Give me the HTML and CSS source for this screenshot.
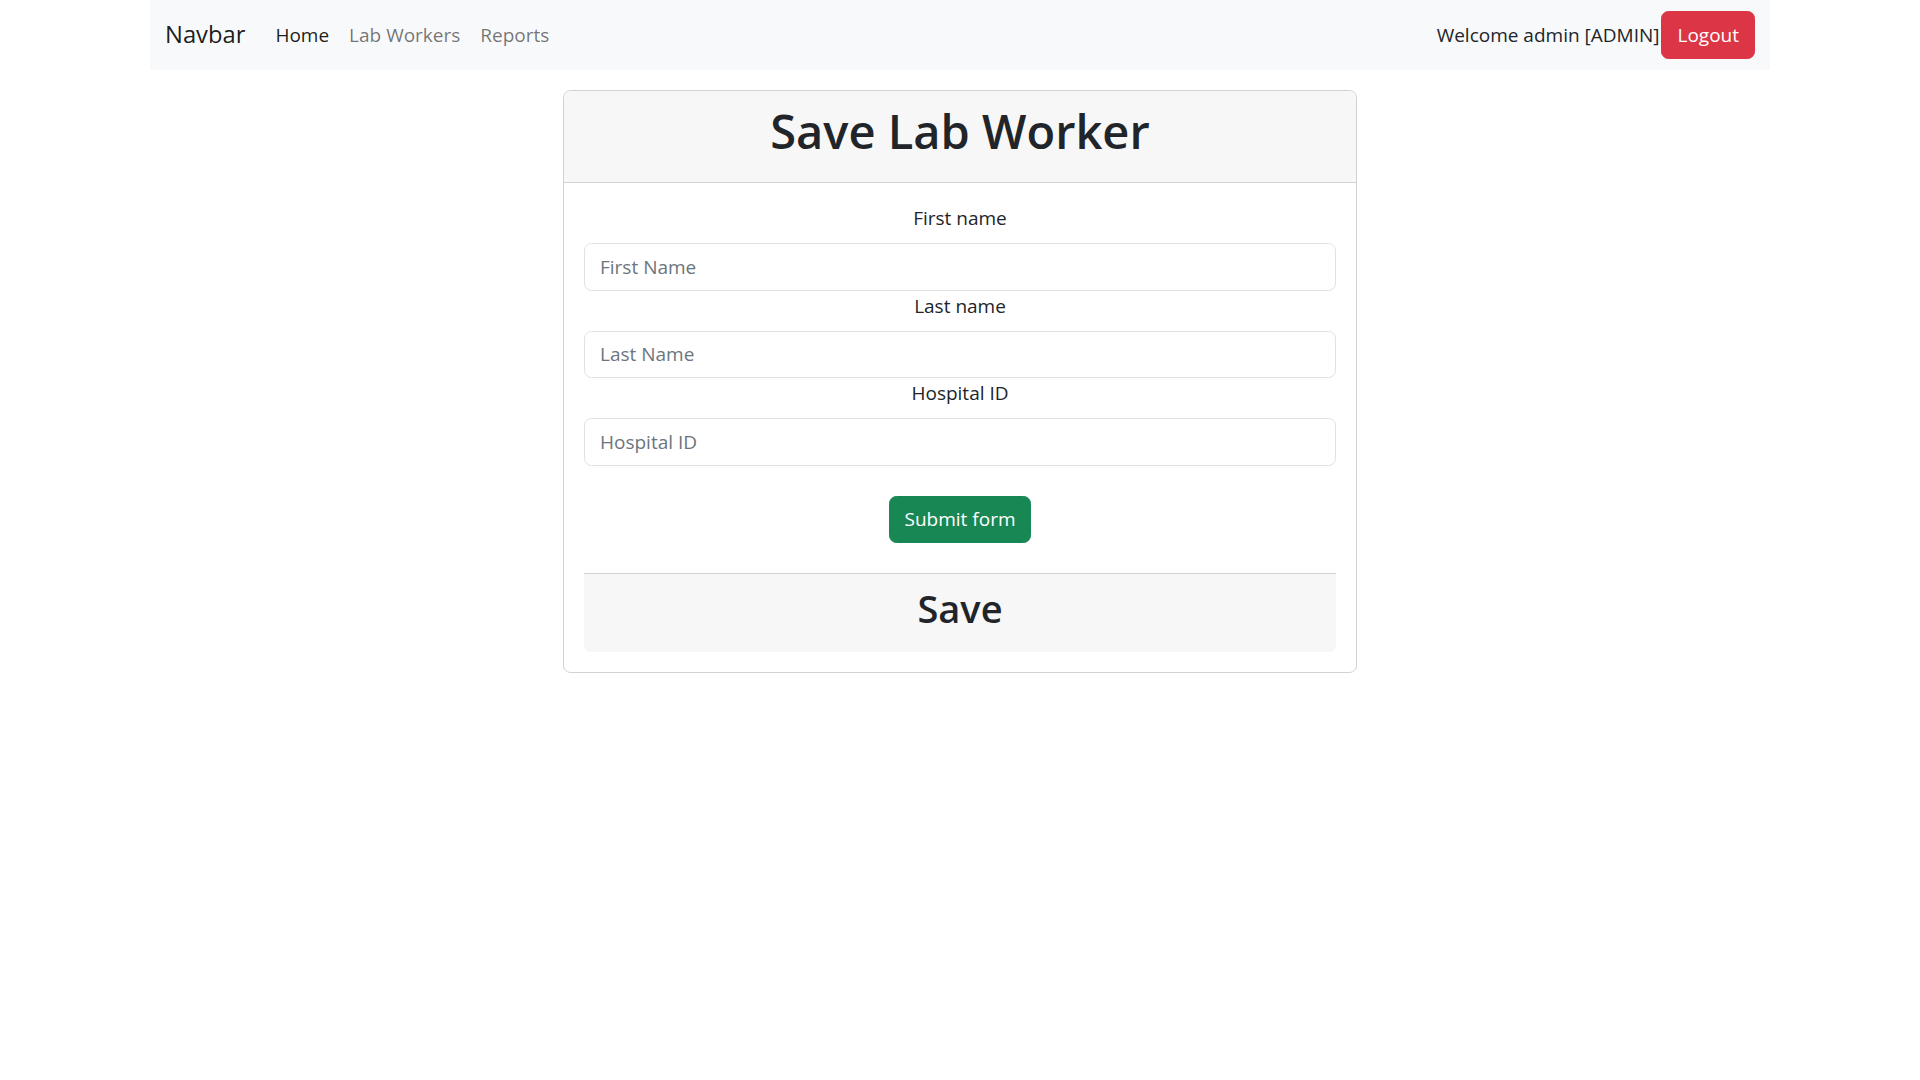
FILE: index.html
```html
<!DOCTYPE html>
<html lang="en">
<head>
<meta charset="utf-8">
<title>Save Lab Worker</title>
<link rel="stylesheet" href="styles.css">
</head>
<body>
<div class="container">
  <nav class="navbar">
    <a class="brand" href="#">Navbar</a>
    <ul class="nav">
      <li><a class="nav-link active" href="#">Home</a></li>
      <li><a class="nav-link" href="#">Lab Workers</a></li>
      <li><a class="nav-link" href="#">Reports</a></li>
    </ul>
    <div class="nav-right">
      <span class="welcome">Welcome admin [ADMIN]</span>
      <button class="btn btn-danger" type="button">Logout</button>
    </div>
  </nav>
</div>

<main class="page">
  <div class="card">
    <div class="card-header">
      <h1 class="title">Save Lab Worker</h1>
    </div>
    <div class="card-body">
      <form class="form">
        <label class="form-label" for="fn">First name</label>
        <input class="form-control" id="fn" type="text" placeholder="First Name">
        <label class="form-label" for="ln">Last name</label>
        <input class="form-control" id="ln" type="text" placeholder="Last Name">
        <label class="form-label" for="hid">Hospital ID</label>
        <input class="form-control" id="hid" type="text" placeholder="Hospital ID">
        <div class="actions">
          <button class="btn btn-success" type="submit">Submit form</button>
        </div>
      </form>
      <div class="card-footer">
        <h2 class="footer-title">Save</h2>
      </div>
    </div>
  </div>
</main>
</body>
</html>
```

FILE: styles.css
```css
* { box-sizing: border-box; }

html, body {
  margin: 0;
  padding: 0;
  background: #fff;
}

body {
  font-family: "Open Sans", "Noto Sans", "Liberation Sans", sans-serif;
  font-size: 19px;
  line-height: 30px;
  color: #212529;
}

.container {
  max-width: 1650px;
  margin: 0 auto;
  padding: 0 15px;
}

.navbar {
  display: flex;
  align-items: center;
  background: #f8f9fa;
  padding: 10px 15px;
  height: 70px;
}

.brand {
  font-size: 23.75px;
  line-height: 37.5px;
  color: rgba(0, 0, 0, 0.9);
  text-decoration: none;
  margin-right: 20px;
  padding: 6px 0;
}

.nav {
  display: flex;
  list-style: none;
  margin: 0;
  padding: 0;
}

.nav-link {
  display: block;
  padding: 10px 10px;
  line-height: 30px;
  color: rgba(0, 0, 0, 0.55);
  text-decoration: none;
}

.nav-link.active {
  color: rgba(0, 0, 0, 0.9);
}

.nav-right {
  margin-left: auto;
  display: flex;
  align-items: center;
}

.welcome {
  color: #212529;
  margin-right: 2px;
}

.btn {
  display: inline-block;
  font-family: inherit;
  font-size: 19px;
  line-height: 30px;
  padding: 7.75px 15px;
  border: 1px solid transparent;
  border-radius: 7.5px;
  color: #fff;
  cursor: pointer;
}

.btn-danger {
  background: #dc3545;
  border-color: #dc3545;
}

.btn-success {
  background: #198754;
  border-color: #198754;
}

.page {
  display: flex;
  justify-content: center;
  padding-top: 20px;
}

.card {
  width: 794px;
  border: 1px solid #d2d2d2;
  border-radius: 7.5px;
  background: #fff;
  overflow: hidden;
}

.card-header {
  background: #f7f7f7;
  border-bottom: 1px solid #d2d2d2;
  padding: 10px 20px 11px;
  text-align: center;
}

.title {
  margin: 0 0 10px;
  font-size: 47px;
  font-weight: 600;
  line-height: 60px;
}

.card-body {
  padding: 20px;
}

.form {
  display: flex;
  flex-direction: column;
}

.form-label {
  display: block;
  text-align: center;
  line-height: 30px;
  margin-bottom: 10px;
}

.form-control {
  display: block;
  width: 100%;
  font-family: inherit;
  font-size: 19px;
  line-height: 30px;
  padding: 7.75px 15px;
  color: #212529;
  background: #fff;
  border: 1px solid #dee2e6;
  border-radius: 7.5px;
  margin: 0;
}

.form-control::placeholder {
  color: #6c757d;
  opacity: 1;
}

.actions {
  display: flex;
  justify-content: center;
  margin-top: 30px;
  margin-bottom: 30px;
}

.card-footer {
  background: #f7f7f7;
  border-top: 1px solid #d2d2d2;
  border-radius: 0 0 6.5px 6.5px;
  padding: 10px 20px;
  text-align: center;
}

.footer-title {
  margin: 0 0 10px;
  font-size: 38px;
  font-weight: 600;
  line-height: 48px;
}
```
